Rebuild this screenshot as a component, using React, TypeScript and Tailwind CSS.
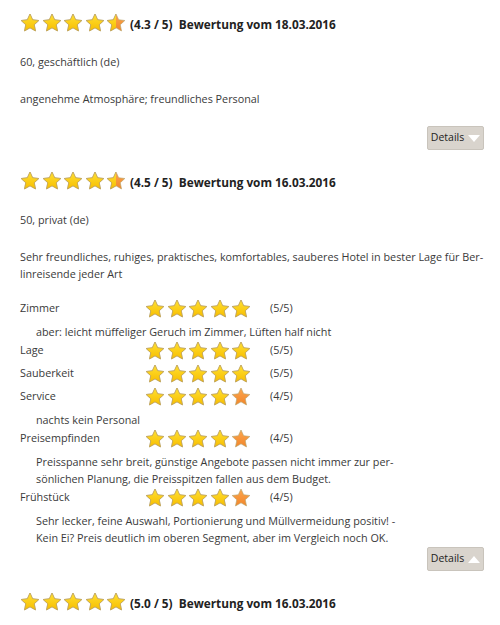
import { useId } from 'react'

type Criterion = {
  label: string
  score: number
  comment?: string[]
}

type Review = {
  rating: number
  date: string
  meta: string
  text: string[]
  criteria?: Criterion[]
  open?: boolean
}

const reviews: Review[] = [
  {
    rating: 4.3,
    date: '18.03.2016',
    meta: '60, geschäftlich (de)',
    text: ['angenehme Atmosphäre; freundliches Personal'],
  },
  {
    rating: 4.5,
    date: '16.03.2016',
    meta: '50, privat (de)',
    text: [
      'Sehr freundliches, ruhiges, praktisches, komfortables, sauberes Hotel in bester Lage für Ber-',
      'linreisende jeder Art',
    ],
    open: true,
    criteria: [
      { label: 'Zimmer', score: 5, comment: ['aber: leicht müffeliger Geruch im Zimmer, Lüften half nicht'] },
      { label: 'Lage', score: 5 },
      { label: 'Sauberkeit', score: 5 },
      { label: 'Service', score: 4, comment: ['nachts kein Personal'] },
      {
        label: 'Preisempfinden',
        score: 4,
        comment: [
          'Preisspanne sehr breit, günstige Angebote passen nicht immer zur per-',
          'sönlichen Planung, die Preisspitzen fallen aus dem Budget.',
        ],
      },
      {
        label: 'Frühstück',
        score: 4,
        comment: [
          'Sehr lecker, feine Auswahl, Portionierung und Müllvermeidung positiv! -',
          'Kein Ei? Preis deutlich im oberen Segment, aber im Vergleich noch OK.',
        ],
      },
    ],
  },
  {
    rating: 5,
    date: '16.03.2016',
    meta: '',
    text: [],
  },
]

// fill: 1 = full yellow, 0 = full orange, in between = split
function Star({ fill }: { fill: number }) {
  const id = useId().replace(/:/g, '')
  const pct = `${Math.round(fill * 100)}%`
  return (
    <svg width="20" height="20" viewBox="0 0 24 24" className="shrink-0">
      <defs>
        <linearGradient id={`y${id}`} x1="0" y1="0" x2="0" y2="1">
          <stop offset="0%" stopColor="#ffe033" />
          <stop offset="100%" stopColor="#f7be00" />
        </linearGradient>
        <linearGradient id={`o${id}`} x1="0" y1="0" x2="0" y2="1">
          <stop offset="0%" stopColor="#fca64e" />
          <stop offset="100%" stopColor="#f2862a" />
        </linearGradient>
        <clipPath id={`c${id}`}>
          <rect x="0" y="0" width={pct} height="24" />
        </clipPath>
      </defs>
      <path
        d="M12 1.2l3.2 6.9 7.4.9-5.5 5.1 1.5 7.4L12 17.8l-6.6 3.7 1.5-7.4L1.4 9l7.4-.9z"
        fill={`url(#o${id})`}
        stroke="#b8a36a"
        strokeWidth="0.8"
        strokeLinejoin="round"
      />
      <path
        d="M12 1.2l3.2 6.9 7.4.9-5.5 5.1 1.5 7.4L12 17.8l-6.6 3.7 1.5-7.4L1.4 9l7.4-.9z"
        fill={`url(#y${id})`}
        stroke="#b8a36a"
        strokeWidth="0.8"
        strokeLinejoin="round"
        clipPath={`url(#c${id})`}
      />
    </svg>
  )
}

function Stars({ value }: { value: number }) {
  return (
    <div className="flex gap-[1.5px]">
      {[0, 1, 2, 3, 4].map((i) => {
        const rest = value - i
        const fill = rest >= 1 ? 1 : rest > 0 ? 0.5 : 0
        return <Star key={i} fill={fill} />
      })}
    </div>
  )
}

function DetailsButton({ open }: { open?: boolean }) {
  return (
    <div className="flex justify-end">
      <button className="flex h-[24px] w-[57px] items-center justify-center gap-[4px] rounded-[2px] border border-[#c9c4bc] bg-[#d9d4cd] text-[10.5px] text-[#222]">
        Details
        <svg width="12" height="7" viewBox="0 0 12 7">
          {open ? <path d="M0 7L6 0l6 7z" fill="#fff" /> : <path d="M0 0h12L6 7z" fill="#fff" />}
        </svg>
      </button>
    </div>
  )
}

function ReviewBlock({ review }: { review: Review }) {
  return (
    <div className="pb-[19px]">
      <div className="flex h-[22px] items-end">
        <Stars value={review.rating} />
        <span className="ml-[4px] text-[11.8px] font-bold leading-[17px] text-[#222]">
          ({review.rating.toFixed(1)} / 5)&nbsp; Bewertung vom {review.date}
        </span>
      </div>

      {review.meta && <p className="mt-[20px] leading-[17px]">{review.meta}</p>}

      {review.text.length > 0 && (
        <p className="mt-[20px] leading-[17px]">
          {review.text.map((line, i) => (
            <span key={i} className="block whitespace-nowrap">
              {line}
            </span>
          ))}
        </p>
      )}

      {review.criteria && (
        <div className="mt-[15px]">
          {review.criteria.map((c) => (
            <div key={c.label}>
              <div className="flex h-[23px] items-center">
                <span className="w-[125px]">{c.label}</span>
                <Stars value={c.score} />
                <span className="ml-[19px]">({c.score}/5)</span>
              </div>
              {c.comment && (
                <div className="pl-[16px] pt-[3px] leading-[17px] -mb-[1px]">
                  {c.comment.map((line, i) => (
                    <span key={i} className="block whitespace-nowrap">
                      {line}
                    </span>
                  ))}
                </div>
              )}
            </div>
          ))}
        </div>
      )}

      {review.meta && (
        <div className={review.criteria ? 'mt-[2px]' : 'mt-[19px]'}>
          <DetailsButton open={review.open} />
        </div>
      )}
    </div>
  )
}

export default function App() {
  return (
    <div
      className="h-[625px] w-[500px] overflow-hidden bg-white pl-[20px] pr-[16px] pt-[11px] text-[10.8px] text-[#3a3a3a]"
      style={{ fontFamily: '"Open Sans", "Liberation Sans", sans-serif' }}
    >
      {reviews.map((r, i) => (
        <ReviewBlock key={i} review={r} />
      ))}
    </div>
  )
}
